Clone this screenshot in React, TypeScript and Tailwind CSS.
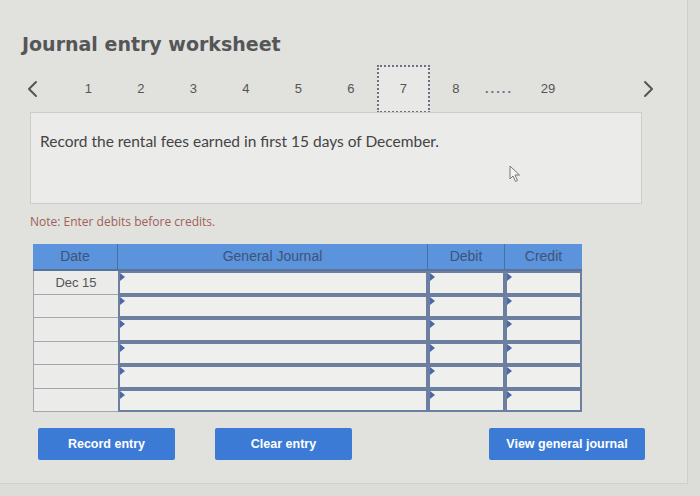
import React from 'react'

const pages = ['1', '2', '3', '4', '5', '6', '7', '8']

function Chevron({ dir }: { dir: 'left' | 'right' }) {
  return (
    <svg width="14" height="18" viewBox="0 0 14 18" fill="none" stroke="#555" strokeWidth="2" strokeLinecap="round" strokeLinejoin="round">
      {dir === 'left' ? <path d="M10 2 L3 9 L10 16" /> : <path d="M4 2 L11 9 L4 16" />}
    </svg>
  )
}

function InputCell() {
  return (
    <div className="relative h-full border-2 border-[#6c7fa1] bg-[#efefee]">
      <span className="absolute left-0 top-0 w-0 h-0 border-y-[4px] border-y-transparent border-l-[5px] border-l-[#4a68a8]" />
    </div>
  )
}

export default function App() {
  const rows = ['Dec 15', '', '', '', '', '']

  return (
    <div className="w-[700px] h-[496px] bg-[#dcdcd9] overflow-hidden" style={{ fontFamily: '"Liberation Sans", Arial, sans-serif' }}>
      <div className="w-[688px] h-[484px] bg-[#e1e1de] border-r border-b border-[#cfcfcc] pt-[31px]">
        <h1 className="pl-[22px] text-[19px] leading-[26px] font-bold text-[#555658]" style={{ fontFamily: '"DejaVu Sans", Verdana, sans-serif' }}>
          Journal entry worksheet
        </h1>

        {/* pagination */}
        <div className="flex items-center h-[46px] mt-[9px] text-[13px] text-[#555]">
          <div className="w-[62px] flex justify-center pl-[4px]"><Chevron dir="left" /></div>
          {pages.map((p) =>
            p === '7' ? (
              <div key={p} className="w-[52.5px] h-[48px] flex items-center justify-center border-2 border-dotted border-[#6b6f86] bg-[#e8e8e6]">{p}</div>
            ) : (
              <div key={p} className="w-[52.5px] text-center">{p}</div>
            )
          )}
          <div className="w-[34px] text-center tracking-[2px] text-[#6b6f86] font-bold">.....</div>
          <div className="w-[64px] text-center">29</div>
          <div className="w-[75px] flex justify-end"><Chevron dir="right" /></div>
        </div>

        {/* prompt box */}
        <div className="ml-[30px] w-[612px] h-[92px] bg-[#ebebea] border border-[#cdcdca] px-[9px] pt-[17px] relative">
          <p className="text-[15.5px] text-[#444]" style={{ fontFamily: 'Lato, "Open Sans", sans-serif' }}>
            Record the rental fees earned in first 15 days of December.
          </p>
          <svg className="absolute left-[478px] top-[52px]" width="12" height="18" viewBox="0 0 12 18" fill="#f4f4f4" stroke="#777" strokeWidth="1">
            <path d="M1 1 L1 14 L4 11 L6.5 16.5 L8.5 15.5 L6 10 L10.5 10 Z" />
          </svg>
        </div>

        <p className="ml-[30px] mt-[9px] text-[12px] text-[#a05f57]" style={{ fontFamily: '"Open Sans", Verdana, sans-serif' }}>
          Note: Enter debits before credits.
        </p>

        {/* table */}
        <div className="ml-[33px] mt-[13px] w-[549px]">
          <div className="grid grid-cols-[85px_310px_77px_77px] h-[27px] bg-[#5b93dc] text-[14px] text-[#3f5277] border-b-2 border-[#5a7398]">
            <div className="flex items-center justify-center border-r border-[#4a6fa5]">Date</div>
            <div className="flex items-center justify-center border-r border-[#4a6fa5]">General Journal</div>
            <div className="flex items-center justify-center border-r border-[#4a6fa5]">Debit</div>
            <div className="flex items-center justify-center">Credit</div>
          </div>
          {rows.map((d, i) => (
            <div key={i} className="grid grid-cols-[85px_310px_77px_77px] h-[23.5px]">
              <div className="flex items-center justify-center bg-[#ebebea] border-l border-b border-[#a3a7ae] text-[13px] text-[#555]">{d}</div>
              <InputCell />
              <InputCell />
              <InputCell />
            </div>
          ))}
        </div>

        {/* buttons */}
        <div className="flex mt-[16px] pl-[38px] text-[12.5px] font-bold text-white">
          <button className="w-[137px] h-[32px] bg-[#3b7bd6] rounded-[2px]">Record entry</button>
          <button className="ml-[40px] w-[137px] h-[32px] bg-[#3b7bd6] rounded-[2px]">Clear entry</button>
          <button className="ml-[137px] w-[156px] h-[32px] bg-[#3b7bd6] rounded-[2px]">View general journal</button>
        </div>
      </div>
    </div>
  )
}
